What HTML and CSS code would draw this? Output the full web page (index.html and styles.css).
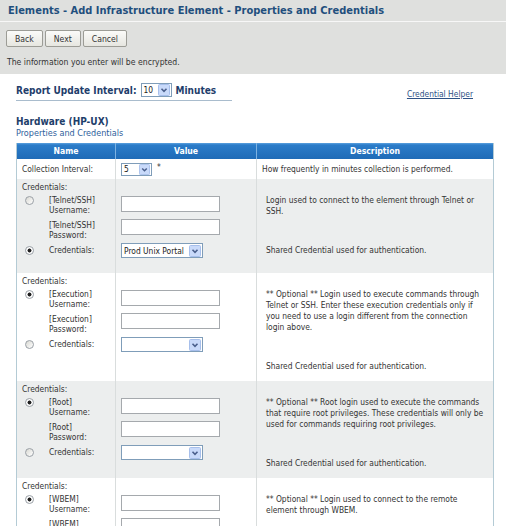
FILE: index.html
```html
<!DOCTYPE html>
<html lang="en">
<head>
<meta charset="utf-8">
<title>Elements - Add Infrastructure Element - Properties and Credentials</title>
<link rel="stylesheet" href="styles.css">
</head>
<body>
<div class="titlebar">
  <h1>Elements - Add Infrastructure Element - Properties and Credentials</h1>
</div>
<div class="toolbar">
  <div class="buttons">
    <button type="button" class="btn">Back</button>
    <button type="button" class="btn">Next</button>
    <button type="button" class="btn">Cancel</button>
  </div>
  <p class="note">The information you enter will be encrypted.</p>
</div>

<div class="content">
  <div class="top-row">
    <div class="interval">
      <span>Report Update Interval:</span>
      <span class="select sel-small"><span class="sel-val">10</span><svg class="sel-btn" viewBox="0 0 12 12"><rect x="0.5" y="0.5" width="11" height="11" rx="1" fill="#c9dafa" stroke="#a7bfeb"/><path d="M3.5 4.8 L6 7.3 L8.5 4.8" fill="none" stroke="#4a5f8c" stroke-width="1.6"/></svg></span>
      <span>Minutes</span>
    </div>
    <a class="helper" href="#">Credential Helper</a>
  </div>

  <h2 class="section">Hardware (HP-UX)</h2>
  <div class="subtitle">Properties and Credentials</div>

  <table class="grid">
    <colgroup>
      <col class="c-name">
      <col class="c-value">
      <col class="c-desc">
    </colgroup>
    <thead>
      <tr><th>Name</th><th>Value</th><th>Description</th></tr>
    </thead>
    <tbody>
      <tr class="row-simple">
        <td class="name">Collection Interval:</td>
        <td class="value"><span class="select sel-small sel-5"><span class="sel-val">5</span><svg class="sel-btn" viewBox="0 0 12 12"><rect x="0.5" y="0.5" width="11" height="11" rx="1" fill="#c9dafa" stroke="#a7bfeb"/><path d="M3.5 4.8 L6 7.3 L8.5 4.8" fill="none" stroke="#4a5f8c" stroke-width="1.6"/></svg></span><span class="req">*</span></td>
        <td class="desc">How frequently in minutes collection is performed.</td>
      </tr>

      <tr class="row-cred alt">
        <td class="name">
          <div class="cred-head">Credentials:</div>
          <div class="sub sub1"><input type="radio" class="radio" name="r1"><span class="lbl">[Telnet/SSH]<br>Username:</span></div>
          <div class="sub sub2"><span class="lbl">[Telnet/SSH]<br>Password:</span></div>
          <div class="sub sub3"><input type="radio" class="radio" name="r1" checked><span class="lbl">Credentials:</span></div>
        </td>
        <td class="value">
          <div class="cred-head"></div>
          <div class="sub sub1"><input type="text" class="field"></div>
          <div class="sub sub2"><input type="password" class="field"></div>
          <div class="sub sub3"><span class="select sel-wide"><span class="sel-val">Prod Unix Portal</span><svg class="sel-btn" viewBox="0 0 12 12"><rect x="0.5" y="0.5" width="11" height="11" rx="1" fill="#c9dafa" stroke="#a7bfeb"/><path d="M3.5 4.8 L6 7.3 L8.5 4.8" fill="none" stroke="#4a5f8c" stroke-width="1.6"/></svg></span></div>
        </td>
        <td class="desc">
          <div class="desc-text">Login used to connect to the element through Telnet or<br>SSH.</div>
          <div class="desc-shared">Shared Credential used for authentication.</div>
        </td>
      </tr>

      <tr class="row-cred">
        <td class="name">
          <div class="cred-head">Credentials:</div>
          <div class="sub sub1"><input type="radio" class="radio" name="r2" checked><span class="lbl">[Execution]<br>Username:</span></div>
          <div class="sub sub2"><span class="lbl">[Execution]<br>Password:</span></div>
          <div class="sub sub3"><input type="radio" class="radio" name="r2"><span class="lbl">Credentials:</span></div>
        </td>
        <td class="value">
          <div class="cred-head"></div>
          <div class="sub sub1"><input type="text" class="field"></div>
          <div class="sub sub2"><input type="password" class="field"></div>
          <div class="sub sub3"><span class="select sel-wide"><span class="sel-val"></span><svg class="sel-btn" viewBox="0 0 12 12"><rect x="0.5" y="0.5" width="11" height="11" rx="1" fill="#c9dafa" stroke="#a7bfeb"/><path d="M3.5 4.8 L6 7.3 L8.5 4.8" fill="none" stroke="#4a5f8c" stroke-width="1.6"/></svg></span></div>
        </td>
        <td class="desc">
          <div class="desc-text">** Optional ** Login used to execute commands through<br>Telnet or SSH. Enter these execution credentials only if<br>you need to use a login different from the connection<br>login above.</div>
          <div class="desc-shared">Shared Credential used for authentication.</div>
        </td>
      </tr>

      <tr class="row-cred alt">
        <td class="name">
          <div class="cred-head">Credentials:</div>
          <div class="sub sub1"><input type="radio" class="radio" name="r3" checked><span class="lbl">[Root]<br>Username:</span></div>
          <div class="sub sub2"><span class="lbl">[Root]<br>Password:</span></div>
          <div class="sub sub3"><input type="radio" class="radio" name="r3"><span class="lbl">Credentials:</span></div>
        </td>
        <td class="value">
          <div class="cred-head"></div>
          <div class="sub sub1"><input type="text" class="field"></div>
          <div class="sub sub2"><input type="password" class="field"></div>
          <div class="sub sub3"><span class="select sel-wide"><span class="sel-val"></span><svg class="sel-btn" viewBox="0 0 12 12"><rect x="0.5" y="0.5" width="11" height="11" rx="1" fill="#c9dafa" stroke="#a7bfeb"/><path d="M3.5 4.8 L6 7.3 L8.5 4.8" fill="none" stroke="#4a5f8c" stroke-width="1.6"/></svg></span></div>
        </td>
        <td class="desc">
          <div class="desc-text">** Optional ** Root login used to execute the commands<br>that require root privileges. These credentials will only be<br>used for commands requiring root privileges.</div>
          <div class="desc-shared">Shared Credential used for authentication.</div>
        </td>
      </tr>

      <tr class="row-cred">
        <td class="name">
          <div class="cred-head">Credentials:</div>
          <div class="sub sub1"><input type="radio" class="radio" name="r4" checked><span class="lbl">[WBEM]<br>Username:</span></div>
          <div class="sub sub2"><span class="lbl">[WBEM]<br>Password:</span></div>
          <div class="sub sub3"><input type="radio" class="radio" name="r4"><span class="lbl">Credentials:</span></div>
        </td>
        <td class="value">
          <div class="cred-head"></div>
          <div class="sub sub1"><input type="text" class="field"></div>
          <div class="sub sub2"><input type="password" class="field"></div>
          <div class="sub sub3"><span class="select sel-wide"><span class="sel-val"></span><svg class="sel-btn" viewBox="0 0 12 12"><rect x="0.5" y="0.5" width="11" height="11" rx="1" fill="#c9dafa" stroke="#a7bfeb"/><path d="M3.5 4.8 L6 7.3 L8.5 4.8" fill="none" stroke="#4a5f8c" stroke-width="1.6"/></svg></span></div>
        </td>
        <td class="desc">
          <div class="desc-text">** Optional ** Login used to connect to the remote<br>element through WBEM.</div>
          <div class="desc-shared">Shared Credential used for authentication.</div>
        </td>
      </tr>
    </tbody>
  </table>
</div>
</body>
</html>
```
FILE: styles.css
```css
* { box-sizing: border-box; }

body {
  margin: 0;
  background: #ffffff;
  color: #333333;
  font-family: "DejaVu Sans Condensed", "DejaVu Sans", sans-serif;
  font-size: 8.4px;
}

.titlebar {
  background: #dfe0de;
  height: 22px;
  border-bottom: 1px solid #f7f7f7;
  padding-left: 8px;
}

.titlebar h1 {
  margin: 0;
  font-size: 11px;
  line-height: 21px;
  font-weight: bold;
  color: #1f4f7d;
}

.toolbar {
  background: #dfe0de;
  height: 52px;
  padding: 8px 0 0 6px;
}

.buttons {
  display: flex;
  gap: 2px;
}

.btn {
  height: 17px;
  min-width: 36px;
  padding: 0 8px;
  margin: 0;
  border: 1px solid #9c9c96;
  border-radius: 2px;
  background: linear-gradient(#fbfbf9, #e6e6e0);
  font-family: inherit;
  font-size: 8.6px;
  color: #333333;
}

.note {
  margin: 9px 0 0 1px;
  line-height: 12px;
  font-size: 8.6px;
}

.content {
  padding: 0 0 0 16px;
}

.top-row {
  display: flex;
  justify-content: space-between;
  align-items: flex-start;
  margin-top: 9px;
  padding-right: 33px;
}

.interval {
  width: 216px;
  display: flex;
  align-items: center;
  gap: 4px;
  height: 18px;
  padding-bottom: 3px;
  border-bottom: 1px solid #a9bccd;
  font-size: 10px;
  font-weight: bold;
  color: #1f3e6b;
}

.helper {
  margin-top: 4px;
  line-height: 14px;
  font-size: 8.4px;
  color: #2d5286;
  text-decoration: underline;
}

.select {
  display: inline-flex;
  align-items: center;
  justify-content: space-between;
  height: 14px;
  border: 1px solid #7f9db9;
  background: #ffffff;
  padding-left: 2px;
  padding-right: 1px;
  font-size: 8.4px;
  font-weight: normal;
  color: #222222;
  vertical-align: middle;
}

.sel-small { width: 31px; }
.sel-5 { height: 13px; }
.sel-wide { width: 82px; height: 15px; }

.sel-btn {
  width: 12px;
  height: 12px;
  flex: none;
}

.sel-5 .sel-btn { width: 11px; height: 11px; }

.section {
  margin: 15px 0 0 0;
  font-size: 10px;
  line-height: 12px;
  font-weight: bold;
  color: #1e3e6a;
}

.subtitle {
  font-size: 9px;
  line-height: 11px;
  color: #2f5f9c;
}

.grid {
  margin-top: 4px;
  width: 476px;
  table-layout: fixed;
  border-collapse: separate;
  border-spacing: 0;
  border: 1px solid #b4cbd5;
  border-top: none;
}

.c-name { width: 98px; }
.c-value { width: 141px; }
.c-desc { width: 237px; }

.grid th {
  height: 16px;
  padding: 0;
  line-height: 16px;
  font-size: 8.6px;
  font-weight: bold;
  color: #ffffff;
  background: linear-gradient(#5da2df 0, #2b7cc9 2px, #1f6bb7 100%);
  text-align: center;
}

.grid th + th {
  border-left: 1px solid #7db2e2;
}

.grid td {
  padding: 0;
  vertical-align: top;
}

.grid td + td {
  border-left: 1px solid #d9dddd;
}

.grid td.name { padding-left: 5px; }
.grid td.value { padding-left: 5px; }
.grid td.desc { padding-left: 5px; }

.row-simple td {
  height: 20px;
  vertical-align: middle;
  line-height: 11px;
}

.req {
  margin-left: 5px;
  vertical-align: 2px;
}

.alt td { background: #eceeee; }

.cred-head {
  height: 16px;
  padding-top: 2px;
  line-height: 12px;
}

.row-cred td.name,
.row-cred td.value {
  padding-bottom: 10px;
}

.sub {
  display: flex;
  align-items: flex-start;
}

.sub1 { height: 24px; }
.sub2 { height: 24px; }
.sub3 { height: 20px; align-items: flex-start; }

.lbl {
  line-height: 10px;
  margin-left: 15px;
}

.sub2 .lbl {
  margin-left: 27px;
  padding-top: 1px;
}

.sub3 .lbl {
  line-height: 15px;
}

.radio {
  appearance: none;
  -webkit-appearance: none;
  width: 9px;
  height: 9px;
  margin: 1px 0 0 3px;
  border: 1px solid #9aa0a6;
  border-radius: 50%;
  background: linear-gradient(135deg, #d8d8d2, #ffffff);
  flex: none;
}

.sub3 .radio { margin-top: 3px; }

.radio:checked {
  background: radial-gradient(circle, #202020 0, #202020 1.7px, #ffffff 2.3px);
}

.sub1 .field { margin-top: 1px; }

.field {
  width: 99px;
  height: 16px;
  margin: 0;
  padding: 0 2px;
  border: 1px solid #a5a9ad;
  background: #ffffff;
  font-family: inherit;
  font-size: 8.4px;
}

.row-cred td.desc {
  padding: 16px 4px 9px 9px;
}

.desc-text {
  line-height: 11px;
}

.desc-shared {
  margin-top: 28px;
  line-height: 11px;
}
```
